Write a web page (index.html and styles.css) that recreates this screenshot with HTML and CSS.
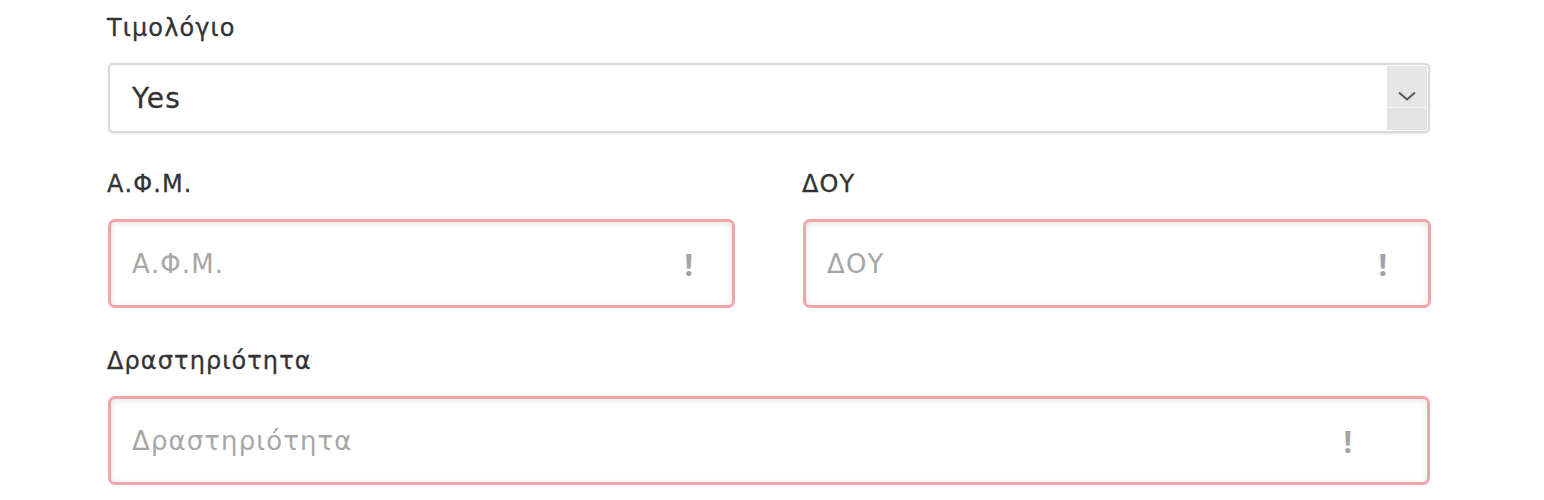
FILE: index.html
```html
<!DOCTYPE html>
<html lang="el">
<head>
<meta charset="utf-8">
<title>Τιμολόγιο</title>
<link rel="stylesheet" href="styles.css">
</head>
<body>
<form class="form">
  <div class="group">
    <label class="label">Τιμολόγιο</label>
    <div class="select">
      <span class="select-value">Yes</span>
      <span class="select-btn">
        <svg width="20" height="12" viewBox="0 0 20 12"><path d="M2 2.5 L10 9.5 L18 2.5" fill="none" stroke="#555" stroke-width="2"/></svg>
      </span>
    </div>
  </div>
  <div class="row">
    <div class="group">
      <label class="label">Α.Φ.Μ.</label>
      <div class="field">
        <input class="input" type="text" placeholder="Α.Φ.Μ.">
        <span class="warn warn-a">!</span>
      </div>
    </div>
    <div class="group">
      <label class="label">ΔΟΥ</label>
      <div class="field">
        <input class="input" type="text" placeholder="ΔΟΥ">
        <span class="warn warn-b">!</span>
      </div>
    </div>
  </div>
  <div class="group">
    <label class="label">Δραστηριότητα</label>
    <div class="field">
      <input class="input" type="text" placeholder="Δραστηριότητα">
      <span class="warn warn-c">!</span>
    </div>
  </div>
</form>
</body>
</html>
```
FILE: styles.css
```css
html, body {
  margin: 0;
  padding: 0;
  background: #fff;
}
body {
  font-family: "DejaVu Sans", "Open Sans", sans-serif;
  color: #333;
}
.form {
  width: 1323px;
  padding: 10px 0 0 107px;
}
.group {
  margin-bottom: 33px;
}
.row .group {
  margin-bottom: 0;
}
.row {
  display: grid;
  grid-template-columns: 628px 629px;
  column-gap: 67px;
  margin-bottom: 35px;
}
.label {
  display: block;
  height: 32px;
  line-height: 36px;
  font-size: 24px;
  letter-spacing: 1.1px;
  color: #333;
  -webkit-text-stroke: 0.3px #333;
  margin-bottom: 21px;
}
.select {
  display: flex;
  align-items: stretch;
  height: 70px;
  margin-left: 1px;
  box-sizing: border-box;
  border: 2px solid #d9d9d9;
  border-radius: 5px;
  box-shadow: 0 1px 2px rgba(0,0,0,0.1);
  background: #fff;
}
.select-value {
  flex: 1;
  display: flex;
  align-items: center;
  padding-left: 22px;
  font-size: 28px;
  letter-spacing: 1.3px;
  color: #333;
  -webkit-text-stroke: 0.3px #333;
}
.select-btn {
  width: 40px;
  margin: 1px 1px 1px 0;
  background: linear-gradient(#e6e6e6 0 64%, #f3f3f3 64% 66%, #e3e3e3 66%);
  display: flex;
  align-items: flex-start;
  justify-content: center;
  padding-top: 24px;
  box-sizing: border-box;
}
.field {
  position: relative;
  margin-left: 1px;
}
.input {
  display: block;
  width: 100%;
  height: 89px;
  box-sizing: border-box;
  border: 3px solid #f5a3a9;
  border-radius: 7px;
  box-shadow: inset 0 2px 7px rgba(0,0,0,0.10);
  padding: 0 70px 0 21px;
  font-family: inherit;
  font-size: 26px;
  letter-spacing: 1.1px;
  color: #333;
  background: #fff;
  outline: none;
}
.input::placeholder {
  color: #a6a6a6;
}
.warn {
  position: absolute;
  top: 50%;
  transform: translateY(-50%);
  font-family: "Open Sans", sans-serif;
  font-size: 30px;
  font-weight: 700;
  color: #a3a3a3;
}
.warn-a { right: 42px; }
.warn-b { right: 44px; }
.warn-c { right: 78px; }
```
